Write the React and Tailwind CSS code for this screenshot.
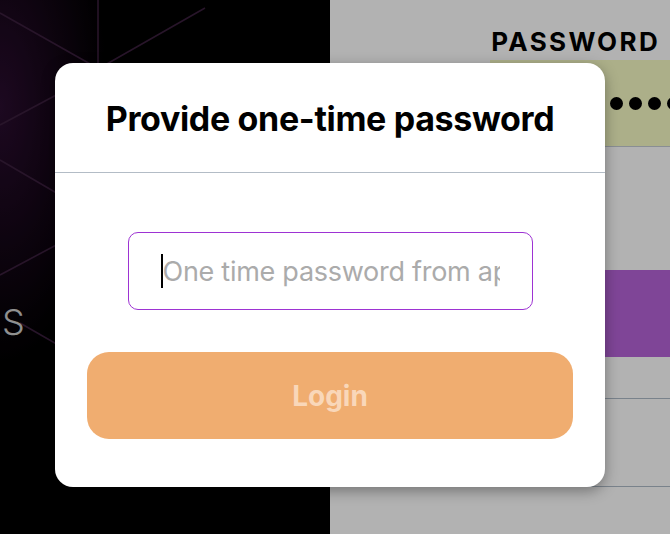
import React from 'react';

const font = { fontFamily: 'Inter, "Noto Sans", sans-serif' };

const Backdrop = () => (
    <div className="flex h-[534px] w-[670px] overflow-hidden">
        {/* left: dark hero panel */}
        <div className="relative w-[330px] h-full bg-black bg-[radial-gradient(ellipse_110px_260px_at_0%_20%,#2a0d2f_0%,#12051500_100%)]">
            <svg className="absolute inset-0" width="330" height="534" viewBox="0 0 330 534">
                <g stroke="#3a1f3d" strokeWidth="1.6" fill="none">
                    <path d="M0 13 L92 65" />
                    <path d="M98 0 L98 65" />
                    <path d="M105 65 L205 8" />
                    <path d="M0 125 L60 93" />
                    <path d="M0 160 L60 195" />
                    <path d="M0 275 L60 243" />
                    <path d="M20 323 L60 346" />
                </g>
            </svg>
            <div className="absolute left-[2px] top-[304px] text-[36px] font-light text-[#cfcfcf] leading-none" style={font}>
                S
            </div>
        </div>
        {/* right: login form */}
        <div className="flex-1 h-full bg-white flex flex-col items-end">
            <div className="pr-[10px] pt-[26px] text-[26px] font-bold tracking-[0.09em] text-black leading-[32px]" style={font}>
                PASSWORD
            </div>
            <div className="mt-[2px] w-[180px] h-[87px] bg-[#f7fbc5] border-b border-[#c4ccd4] flex items-center pl-[120px] gap-[6px]">
                {[0, 1, 2, 3, 4].map(i => (
                    <span key={i} className="w-[13px] h-[13px] rounded-full bg-black shrink-0" />
                ))}
            </div>
            <div className="mt-[123px] w-full h-[87px] bg-[#b663d8]" />
            <div className="mt-[41px] w-full border-b border-[#aebac8]" />
            <div className="mt-[87px] w-full border-b border-[#aebac8]" />
        </div>
    </div>
);

export default function App() {
    return (
        <div className="relative w-[670px] h-[534px] overflow-hidden" style={font}>
            <Backdrop />
            <div className="absolute inset-0 bg-black/30" />
            <div className="absolute left-[55px] top-[63px] w-[550px] bg-white rounded-[18px] shadow-[0_4px_14px_rgba(0,0,0,0.35)] flex flex-col">
                <div className="h-[110px] flex items-center justify-center border-b border-[#b3bcc6]">
                    <h2 className="text-[34px] font-bold text-black leading-none tracking-[-0.01em] pt-[2px]">
                        Provide one-time password
                    </h2>
                </div>
                <div className="flex flex-col items-center pt-[59px] pb-[48px] px-[32px]">
                    <div className="w-[405px] h-[78px] border border-[#9d33d3] rounded-[10px] flex items-center pl-[32px] pr-[32px]">
                        <div className="overflow-hidden whitespace-nowrap flex items-center w-full">
                            <span className="w-[2px] h-[34px] bg-black shrink-0" />
                            <span className="text-[27px] text-[#ababab] leading-none tracking-[-0.01em]">One time password from app</span>
                        </div>
                    </div>
                    <button className="mt-[42px] w-full h-[87px] rounded-[22px] bg-[#f0ad70] text-[28px] font-bold text-[#f9d7b9] leading-none">
                        Login
                    </button>
                </div>
            </div>
        </div>
    );
}
